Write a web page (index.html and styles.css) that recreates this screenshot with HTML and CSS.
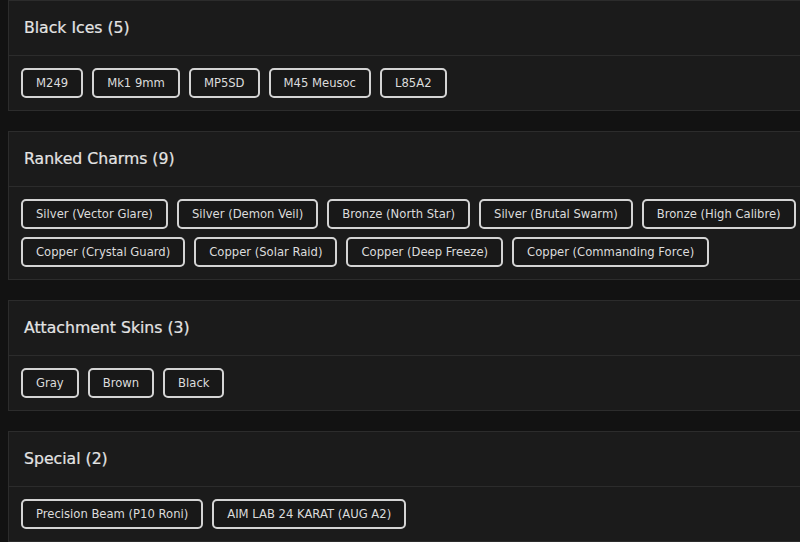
FILE: index.html
```html
<!DOCTYPE html>
<html lang="en">
<head>
<meta charset="utf-8">
<title>Items</title>
<link rel="stylesheet" href="styles.css">
</head>
<body>
<main class="list">
  <section class="card">
    <header class="card-head"><h2 class="card-title">Black Ices (5)</h2></header>
    <div class="card-body">
      <span class="tag">M249</span>
      <span class="tag">Mk1 9mm</span>
      <span class="tag">MP5SD</span>
      <span class="tag">M45 Meusoc</span>
      <span class="tag">L85A2</span>
    </div>
  </section>
  <section class="card">
    <header class="card-head"><h2 class="card-title">Ranked Charms (9)</h2></header>
    <div class="card-body">
      <span class="tag">Silver (Vector Glare)</span>
      <span class="tag">Silver (Demon Veil)</span>
      <span class="tag">Bronze (North Star)</span>
      <span class="tag">Silver (Brutal Swarm)</span>
      <span class="tag">Bronze (High Calibre)</span>
      <span class="tag">Copper (Crystal Guard)</span>
      <span class="tag">Copper (Solar Raid)</span>
      <span class="tag">Copper (Deep Freeze)</span>
      <span class="tag">Copper (Commanding Force)</span>
    </div>
  </section>
  <section class="card">
    <header class="card-head"><h2 class="card-title">Attachment Skins (3)</h2></header>
    <div class="card-body">
      <span class="tag">Gray</span>
      <span class="tag">Brown</span>
      <span class="tag">Black</span>
    </div>
  </section>
  <section class="card">
    <header class="card-head"><h2 class="card-title">Special (2)</h2></header>
    <div class="card-body">
      <span class="tag">Precision Beam (P10 Roni)</span>
      <span class="tag">AIM LAB 24 KARAT (AUG A2)</span>
    </div>
  </section>
</main>
</body>
</html>
```
FILE: styles.css
```css
html, body {
  margin: 0;
  padding: 0;
  background: #121212;
  overflow: hidden;
}
body {
  font-family: "DejaVu Sans", "Noto Sans", sans-serif;
  color: #e2e2e2;
}
.list {
  display: flex;
  flex-direction: column;
  gap: 20px;
  padding: 0 0 0 8px;
  width: 812px;
}
.card {
  background: #1b1b1b;
  border: 1px solid #2c2c2c;
}
.card-head {
  height: 53px;
  display: flex;
  align-items: center;
  padding: 0 15px 1px;
  border-bottom: 1px solid #2c2c2c;
}
.card-title {
  margin: 0;
  font-size: 15.7px;
  font-weight: normal;
  color: #e4e4e4;
  -webkit-text-stroke: 0.2px #e4e4e4;
}
.card-body {
  display: flex;
  flex-wrap: wrap;
  gap: 8px 9px;
  padding: 12px;
}
.tag {
  box-sizing: border-box;
  height: 30px;
  display: inline-flex;
  align-items: center;
  padding: 0 13px;
  border: 2px solid #d4d4d4;
  border-radius: 5px;
  font-size: 11.6px;
  color: #dcdcdc;
  background: #181818;
}
```
